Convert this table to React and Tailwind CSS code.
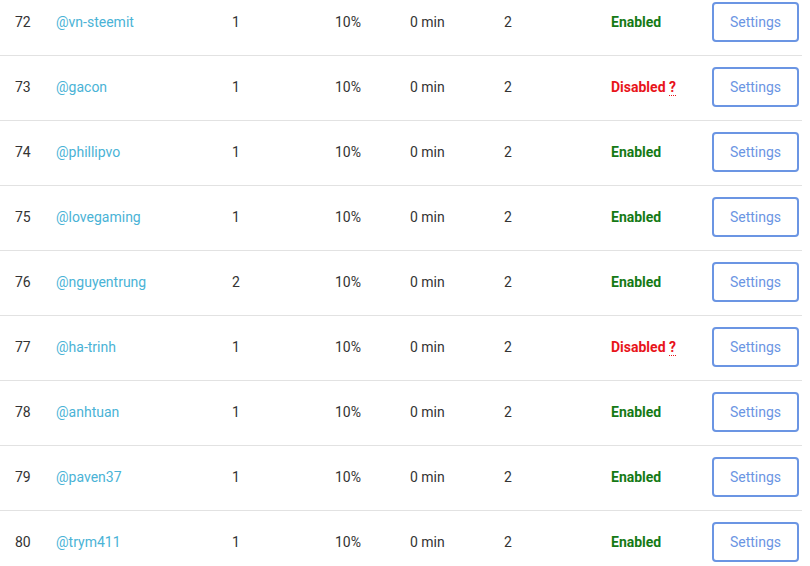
import React from 'react';

const rows = [
  { n: 72, user: '@vn-steemit', a: 1, ok: true },
  { n: 73, user: '@gacon', a: 1, ok: false },
  { n: 74, user: '@phillipvo', a: 1, ok: true },
  { n: 75, user: '@lovegaming', a: 1, ok: true },
  { n: 76, user: '@nguyentrung', a: 2, ok: true },
  { n: 77, user: '@ha-trinh', a: 1, ok: false },
  { n: 78, user: '@anhtuan', a: 1, ok: true },
  { n: 79, user: '@paven37', a: 1, ok: true },
  { n: 80, user: '@trym411', a: 1, ok: true },
];

const Status = ({ ok }) =>
  ok ? (
    <span className="font-bold text-[#157a15]">Enabled</span>
  ) : (
    <span className="font-bold text-[#e8141b]">
      Disabled{' '}
      <abbr title="Upvote weight too low" className="no-underline border-b border-dotted border-[#e8141b]">?</abbr>
    </span>
  );

export default function App() {
  return (
    <div className="w-[810px] h-[566px] overflow-hidden bg-white text-[14px] text-[#333] font-['Roboto','Liberation_Sans',sans-serif]">
      <div className="w-[802px] -mt-[9px]">
        {rows.map((r) => (
          <div
            key={r.n}
            className="grid grid-cols-[56px_176px_103px_75px_94px_107px_101px_1fr] items-center h-[65px] pb-[2px] border-b border-[#e2e2e2]"
          >
            <div className="pl-[15px]">{r.n}</div>
            <div><a className="text-[#4ab3d6]">{r.user}</a></div>
            <div>{r.a}</div>
            <div>10%</div>
            <div>0 min</div>
            <div>2</div>
            <div><Status ok={r.ok} /></div>
            <div>
              <button className="w-[87px] h-[40px] rounded-[4px] border-2 border-[#6b95e3] text-[#6b95e3] bg-white">
                Settings
              </button>
            </div>
          </div>
        ))}
      </div>
    </div>
  );
}
